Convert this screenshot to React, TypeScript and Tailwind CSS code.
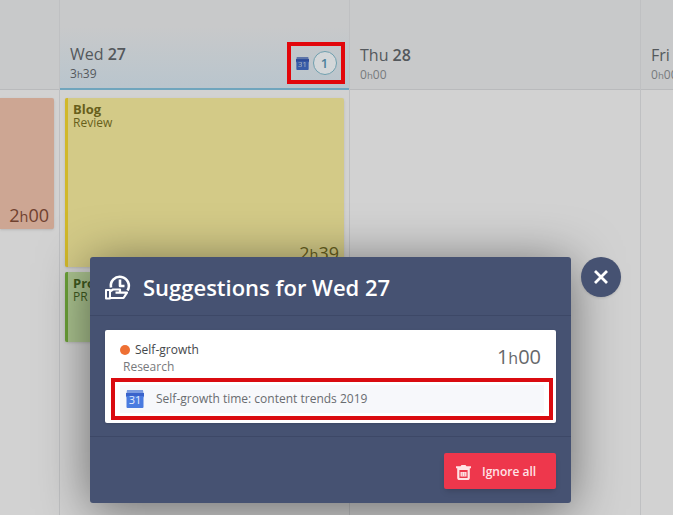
import type { ReactNode } from "react";

type Entry = {
  title: string;
  task: string;
  time?: [string, string];
  box: string;
  strip: string;
  text: string;
};

const WED: Entry[] = [
  {
    title: "Blog",
    task: "Review",
    time: ["2", "39"],
    box: "h-[169px] bg-[#d3ca87]",
    strip: "bg-[#d1b82a]",
    text: "text-[#675f1c]",
  },
  {
    title: "Project",
    task: "PR",
    box: "h-[70px] bg-[#abc38f]",
    strip: "bg-[#6ba038]",
    text: "text-[#3f5a1e]",
  },
];

function Duration({ h, m }: { h: string; m: string }) {
  return (
    <>
      {h}
      <span className="text-[80%]">h</span>
      {m}
    </>
  );
}

function CalendarIcon({ className }: { className: string }) {
  return (
    <svg viewBox="0 0 18 18" className={className} aria-hidden="true">
      <path d="M1 0h16l.5 3.5H.5z" fill="#7d9ce0" />
      <path d="M0 3h18v3.500l-.5 1V17a1 1 0 0 1-1 1H1.500a1 1 0 0 1-1-1V7.500L0 6.500z" fill="#4a7be0" />
      <path d="M0 3h18v3H0z" fill="#3a63cb" />
      <text x="9" y="14" textAnchor="middle" fontSize="11" fill="#e3ebfb" fontFamily="Open Sans">
        31
      </text>
    </svg>
  );
}

function ClockHandIcon() {
  return (
    <svg viewBox="0 0 27 26" className="h-[26px] w-[27px]" fill="none" stroke="#fff" strokeLinejoin="round" aria-hidden="true">
      <path d="M6 13.500A9 9 0 1 1 22.500 16.500" strokeWidth="2.600" />
      <path d="M15 5.500v6.500h4.500" strokeWidth="2.600" />
      <path d="M1 16h4v8.500H1z" strokeWidth="2" />
      <path d="M5 17.500L8 15.500h7v3.200H10.500M15 18.700H22L18.500 24H5" strokeWidth="2.200" />
    </svg>
  );
}

function TrashIcon() {
  return (
    <svg viewBox="0 0 15 15" className="size-[15px]" fill="none" aria-hidden="true">
      <path d="M0 1.200h4.500L5.500 0h4l1 1.200H15V3.200H0z" fill="#ffe3e6" />
      <path d="M2.300 4h10.400V13a1 1 0 0 1-1 1H3.300a1 1 0 0 1-1-1z" stroke="#ffe3e6" strokeWidth="2.200" />
      <path d="M4.500 7h6v4.500h-6z" fill="#ffe3e6" />
      <path d="M6.300 7.500v3.500M8.700 7.500v3.500" stroke="#ee7a88" strokeWidth=".7" />
    </svg>
  );
}

function Day({
  name,
  date,
  time,
  active,
  badge,
  width,
  children,
}: {
  name: string;
  date: string;
  time?: [string, string];
  active?: boolean;
  badge?: ReactNode;
  width: string;
  children?: ReactNode;
}) {
  return (
    <section className={`flex shrink-0 flex-col border-r border-[#bfc0c2] ${width}`}>
      <header
        className={`flex h-[90px] items-end justify-between pb-1 pl-[10px] ${
          active
            ? "border-b-2 border-[#6fa5bd] bg-linear-to-b from-[#c8c9ca] from-30% to-[#b9c5cd]"
            : "border-b border-[#b9babc] bg-[#c8c9ca]"
        }`}
      >
        <div className="text-[#54585c]">
          <h2 className="text-base leading-[21px]">
            {name} <b className="font-semibold">{date}</b>
          </h2>
          {time && (
            <p className={`text-xs leading-[18px] ${active ? "" : "text-[#777a7d]"}`}>
              <Duration h={time[0]} m={time[1]} />
            </p>
          )}
        </div>
        {badge}
      </header>
      <div className="flex flex-1 flex-col gap-[5px] px-[5px] pt-2">{children}</div>
    </section>
  );
}

function EntryCard({ entry }: { entry: Entry }) {
  return (
    <article className={`relative flex overflow-hidden rounded-xs shadow-sm ${entry.box} ${entry.text}`}>
      <div className={`w-[3px] ${entry.strip}`} />
      <div className="px-[5px] pt-1 text-xs leading-[14px]">
        <h3 className="text-[13px] leading-[14px] font-bold">{entry.title}</h3>
        <p>{entry.task}</p>
      </div>
      {entry.time && (
        <p className="absolute right-[5px] bottom-0 text-lg leading-6">
          <Duration h={entry.time[0]} m={entry.time[1]} />
        </p>
      )}
    </article>
  );
}

function SuggestionsDialog() {
  return (
    <div className="absolute top-[257px] left-[90px] flex items-start gap-[10px]">
      <div
        role="dialog"
        aria-labelledby="dialog-title"
        className="w-[481px] rounded-[3px] bg-[#465272] shadow-[0_6px_50px_rgba(0,0,0,0.5)]"
      >
        <header className="flex h-[59px] items-center gap-[11px] border-b border-[#3d4867] px-[15px] pt-[2px]">
          <ClockHandIcon />
          <h1 id="dialog-title" className="text-[22px] leading-7 font-semibold text-white">
            Suggestions for Wed 27
          </h1>
        </header>

        <div className="px-[15px] pt-[14px] pb-[13px]">
          <div className="rounded-xs bg-white px-[6px] pt-[10px] pb-[3px] shadow-sm">
            <div className="flex items-start justify-between px-[9px]">
              <div>
                <p className="flex items-center gap-[5px] text-xs leading-5 text-[#44474b]">
                  <span className="size-[10px] rounded-full bg-[#ee7034]" />
                  Self-growth
                </p>
                <p className="pl-[3px] text-xs leading-[14px] text-[#77797c]">Research</p>
              </div>
              <p className="pt-[3px] text-xl leading-7 text-[#66686b]">
                <Duration h="1" m="00" />
              </p>
            </div>
            <div className="mt-1 mr-[-3px] border-4 border-[#da0b10] px-[5px] py-[3px]">
              <div className="flex h-7 items-center gap-3 bg-[#f7f8fb] px-[6px] text-xs text-[#696c70]">
                <CalendarIcon className="size-[18px]" />
                Self-growth time: content trends 2019
              </div>
            </div>
          </div>
        </div>

        <footer className="flex justify-end border-t border-[#3d4867] px-[15px] pt-4 pb-[14px]">
          <button className="flex h-9 w-28 items-center gap-[11px] rounded-xs bg-[#ee374c] pt-[2px] pl-3 text-xs font-semibold text-[#ffe3e6] shadow-md">
            <TrashIcon />
            Ignore all
          </button>
        </footer>
      </div>

      <button
        aria-label="Close"
        className="flex size-10 items-center justify-center rounded-full bg-[#465272] shadow-sm"
      >
        <svg viewBox="0 0 14 14" className="size-[14px]" stroke="#fff" strokeWidth="2.800" aria-hidden="true">
          <path d="M1 1l12 12M13 1L1 13" />
        </svg>
      </button>
    </div>
  );
}

export default function App() {
  return (
    <main className="relative flex min-h-screen w-full overflow-hidden bg-[#d2d2d2] font-['Open_Sans',sans-serif]">
      <section className="flex w-[60px] shrink-0 flex-col border-r border-[#bfc0c2]">
        <header className="h-[90px] border-b border-[#b9babc] bg-[#c8c9ca]" />
        <div className="pt-2 pr-[5px]">
          <article className="flex h-[131px] items-end justify-end rounded-r-xs bg-[#cda693] pr-[5px] text-lg leading-6 text-[#70412f] shadow-sm">
            <p>
              <Duration h="2" m="00" />
            </p>
          </article>
        </div>
      </section>

      <Day
        name="Wed"
        date="27"
        time={["3", "39"]}
        active
        width="w-[290px]"
        badge={
          <div className="mr-1 flex h-[42px] w-[58px] items-center justify-center gap-1 border-4 border-[#e2060b]">
            <CalendarIcon className="size-[13px] brightness-75" />
            <button className="size-6 rounded-full border border-[#6f9fae] bg-[#d3d7d9] text-[13px] leading-[22px] font-semibold text-[#4c8199]">
              1
            </button>
          </div>
        }
      >
        {WED.map((entry) => (
          <EntryCard key={entry.title} entry={entry} />
        ))}
      </Day>
      <Day name="Thu" date="28" time={["0", "00"]} width="w-[291px]" />
      <Day name="Fri" date="29" time={["0", "00"]} width="w-[290px]" />

      <SuggestionsDialog />
    </main>
  );
}
